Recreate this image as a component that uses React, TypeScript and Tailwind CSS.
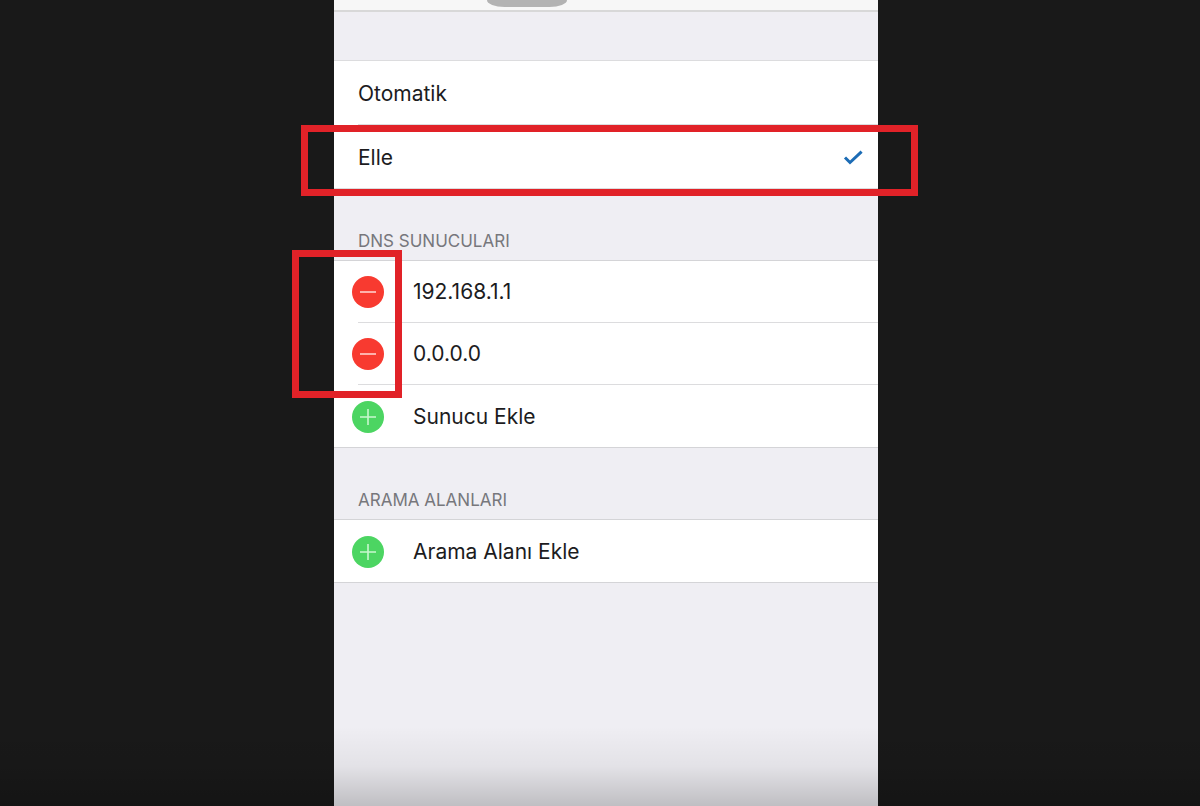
import { useState } from "react"

type Mode = "auto" | "manual"

const modes: { id: Mode; label: string }[] = [
  { id: "auto", label: "Otomatik" },
  { id: "manual", label: "Elle" },
]

function CheckIcon() {
  return (
    <svg width="20" height="16" viewBox="0 0 20 16" fill="none" aria-hidden="true">
      <path d="M2 7.5 7 12.5 18.6 1.6" stroke="#1c6cb5" strokeWidth="3" />
    </svg>
  )
}

function RoundIcon({ kind }: { kind: "add" | "remove" }) {
  return (
    <svg width="32" height="32" viewBox="0 0 32 32" fill="none" aria-hidden="true">
      <circle cx="16" cy="16" r="16" fill={kind === "add" ? "#4cd562" : "#f83a30"} />
      <path
        d={kind === "add" ? "M8 16H24M16 8V24" : "M8 16H24"}
        stroke={kind === "add" ? "#c9f7cf" : "#ffd0cc"}
        strokeWidth="1.6"
      />
    </svg>
  )
}

function Divider() {
  return <div className="ml-6 h-px bg-[#dcdcde]" />
}

function SectionTitle({ children }: { children: string }) {
  return (
    <h2 className="flex h-[71px] items-end px-6 pb-[7px] text-[17px] leading-6 text-[#77777c]">
      {children}
    </h2>
  )
}

function AddRow({ label }: { label: string }) {
  return (
    <button type="button" className="flex h-[62px] w-full items-center gap-[29px] pt-0.5 pl-[18px] text-left">
      <RoundIcon kind="add" />
      <span>{label}</span>
    </button>
  )
}

function ServerRow({ address }: { address: string }) {
  return (
    <div className="flex h-[61px] items-center gap-[29px] pl-[18px]">
      <button type="button" aria-label={`${address} sil`}>
        <RoundIcon kind="remove" />
      </button>
      <input
        type="text"
        aria-label="DNS sunucusu"
        defaultValue={address}
        className="min-w-0 flex-1 bg-transparent outline-none"
      />
    </div>
  )
}

export default function App() {
  const [mode, setMode] = useState<Mode>("manual")

  return (
    <div className="relative grid min-h-screen grid-cols-[334fr_544fr_322fr] overflow-hidden bg-[#191919] font-['Inter','Liberation_Sans',sans-serif] text-[21px] leading-7 text-[#1c1c1e]">
      <main className="col-start-2 bg-[#efeef3]">
        {/* Bottom edge of the navigation bar */}
        <header className="flex h-3 items-start border-b-2 border-[#d8d8d8] bg-[#f7f7f7] pl-[153px]">
          <div className="h-[7px] w-20 rounded-b-[20px_8px] bg-[#b3b3b3]" />
        </header>

        <fieldset className="mt-12 border-y border-[#dcdcde] bg-white">
          {modes.map((m) => (
            <div key={m.id} className="relative">
              {m.id !== "auto" && <Divider />}
              <label className="flex h-[63px] items-center justify-between pt-0.5 pr-[15px] pl-6">
                <input
                  type="radio"
                  name="dns-mode"
                  className="sr-only"
                  checked={mode === m.id}
                  onChange={() => setMode(m.id)}
                />
                <span>{m.label}</span>
                {mode === m.id && <CheckIcon />}
              </label>
              {m.id === "manual" && (
                <div className="pointer-events-none absolute top-px -right-10 -bottom-2 -left-[33px] border-[7px] border-[#e12228]" />
              )}
            </div>
          ))}
        </fieldset>

        <section>
          <SectionTitle>DNS SUNUCULARI</SectionTitle>
          <div className="border-y border-[#d4d4d7] bg-white">
            <div className="relative">
              <ServerRow address="192.168.1.1" />
              <Divider />
              <ServerRow address="0.0.0.0" />
              <div className="pointer-events-none absolute -top-[11px] -bottom-[14px] -left-[42px] w-[110px] border-[7px] border-[#e12228]" />
            </div>
            <Divider />
            <AddRow label="Sunucu Ekle" />
          </div>
        </section>

        <section>
          <SectionTitle>ARAMA ALANLARI</SectionTitle>
          <div className="border-y border-[#d4d4d7] bg-white">
            <AddRow label="Arama Alanı Ekle" />
          </div>
        </section>
      </main>

      {/* Shade along the bottom of the frame */}
      <div className="pointer-events-none absolute inset-x-0 bottom-0 h-20 bg-linear-to-b from-black/0 via-black/5 to-black/20" />
    </div>
  )
}
